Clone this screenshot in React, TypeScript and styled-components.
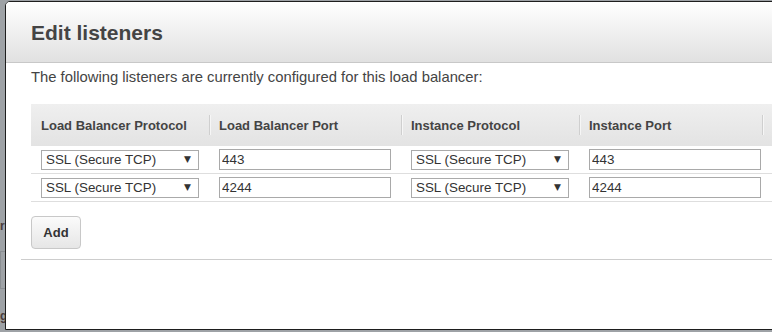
import React from 'react';
import styled, { createGlobalStyle } from 'styled-components';

const GlobalStyle = createGlobalStyle`
  html, body {
    margin: 0;
    padding: 0;
    background: #9ea2a6;
    font-family: "Liberation Sans", Arial, sans-serif;
    overflow: hidden;
  }
`;

const Screen = styled.div`
  position: relative;
  width: 772px;
  height: 332px;
  overflow: hidden;
`;

// page peeking out from behind the modal
const Backdrop = styled.div`
  width: 5px;
  height: 332px;
  overflow: hidden;
  display: flex;
  flex-direction: column;
  align-items: flex-start;
`;

const BackText = styled.div<{ $top: number }>`
  margin-top: ${(p) => p.$top}px;
  font-size: 12px;
  font-weight: bold;
  line-height: 14px;
  color: #4a3c3c;
`;

const BackBox = styled.div`
  margin-top: 18px;
  width: 30px;
  height: 36px;
  border: 1px solid #8a8e92;
  flex-shrink: 0;
`;

const Dialog = styled.div`
  position: absolute;
  left: 5px;
  top: 1px;
  right: -10px;
  height: 327px;
  background: #fff;
  border: 1px solid #1e1e1e;
  border-top-left-radius: 5px;
  overflow: hidden;
`;

const Header = styled.div`
  height: 61px;
  display: flex;
  align-items: center;
  padding: 2px 25px 0;
  box-sizing: border-box;
  background: linear-gradient(#ffffff, #e1e1e1);
  border-bottom: 1px solid #c8c8c8;
`;

const Title = styled.h1`
  margin: 0;
  font-size: 21px;
  font-weight: bold;
  color: #444;
`;

const Body = styled.div`
  padding: 6px 0 0 25px;
`;

const Intro = styled.p`
  margin: 0 0 18px;
  font-size: 14.8px;
  line-height: 17px;
  color: #444;
`;

const Table = styled.table`
  width: 800px;
  border-collapse: collapse;
  table-layout: fixed;
`;

const Th = styled.th<{ $first?: boolean }>`
  position: relative;
  height: 42px;
  padding: 0 10px;
  text-align: left;
  font-size: 13px;
  font-weight: bold;
  color: #444;
  background: linear-gradient(#efefef, #e3e3e3);
  &::before {
    content: '';
    display: ${(p) => (p.$first ? 'none' : 'block')};
    position: absolute;
    left: 0;
    top: 11px;
    height: 20px;
    border-left: 1px solid #cfcfcf;
    border-right: 1px solid #f6f6f6;
  }
`;

const Td = styled.td`
  height: 27px;
  padding: 0 10px;
  border-bottom: 1px solid #dedede;
`;

const SelectWrap = styled.div`
  position: relative;
  width: 158px;
`;

const Select = styled.select`
  appearance: none;
  -webkit-appearance: none;
  width: 100%;
  height: 20px;
  margin: 0;
  padding: 0 0 0 4px;
  border: 1px solid #aaa;
  border-radius: 0;
  background: #fff;
  font-family: "Liberation Sans", Arial, sans-serif;
  font-size: 13.4px;
  color: #333;
`;

const Arrow = styled.span`
  position: absolute;
  right: 8px;
  top: 4px;
  font-family: "DejaVu Sans", sans-serif;
  font-size: 9px;
  color: #333;
  pointer-events: none;
`;

const Input = styled.input`
  width: 172px;
  height: 21px;
  margin: 0;
  padding: 0 2px;
  box-sizing: border-box;
  border: 1px solid #a9a9a9;
  font-family: "Liberation Sans", Arial, sans-serif;
  font-size: 13.4px;
  color: #333;
`;

const AddButton = styled.button`
  margin-top: 14px;
  width: 50px;
  height: 33px;
  border: 1px solid #c8c8c8;
  border-radius: 4px;
  background: linear-gradient(#fbfbfb, #e6e6e6);
  font-family: "Liberation Sans", Arial, sans-serif;
  font-size: 13px;
  font-weight: bold;
  color: #333;
`;

const Rule = styled.hr`
  margin: 10px 0 0 15px;
  border: none;
  border-top: 1px solid #cdcdcd;
`;

const ProtocolSelect = () => (
  <SelectWrap>
    <Select defaultValue="ssl">
      <option value="ssl">SSL (Secure TCP)</option>
      <option value="tcp">TCP</option>
      <option value="http">HTTP</option>
      <option value="https">HTTPS (Secure HTTP)</option>
    </Select>
    <Arrow>▼</Arrow>
  </SelectWrap>
);

const listeners = [
  { lbPort: '443', instancePort: '443' },
  { lbPort: '4244', instancePort: '4244' },
];

export default function App() {
  return (
    <Screen>
      <GlobalStyle />
      <Backdrop>
        <BackText $top={219}>r</BackText>
        <BackBox />
        <BackText $top={20}>g</BackText>
      </Backdrop>
      <Dialog>
        <Header>
          <Title>Edit listeners</Title>
        </Header>
        <Body>
          <Intro>The following listeners are currently configured for this load balancer:</Intro>
          <Table>
            <colgroup>
              <col style={{ width: 178 }} />
              <col style={{ width: 192 }} />
              <col style={{ width: 178 }} />
              <col style={{ width: 183 }} />
              <col />
            </colgroup>
            <thead>
              <tr>
                <Th $first>Load Balancer Protocol</Th>
                <Th>Load Balancer Port</Th>
                <Th>Instance Protocol</Th>
                <Th>Instance Port</Th>
                <Th />
              </tr>
            </thead>
            <tbody>
              {listeners.map((l, i) => (
                <tr key={i}>
                  <Td>
                    <ProtocolSelect />
                  </Td>
                  <Td>
                    <Input defaultValue={l.lbPort} />
                  </Td>
                  <Td>
                    <ProtocolSelect />
                  </Td>
                  <Td>
                    <Input defaultValue={l.instancePort} />
                  </Td>
                  <Td />
                </tr>
              ))}
            </tbody>
          </Table>
          <AddButton>Add</AddButton>
        </Body>
        <Rule />
      </Dialog>
    </Screen>
  );
}
